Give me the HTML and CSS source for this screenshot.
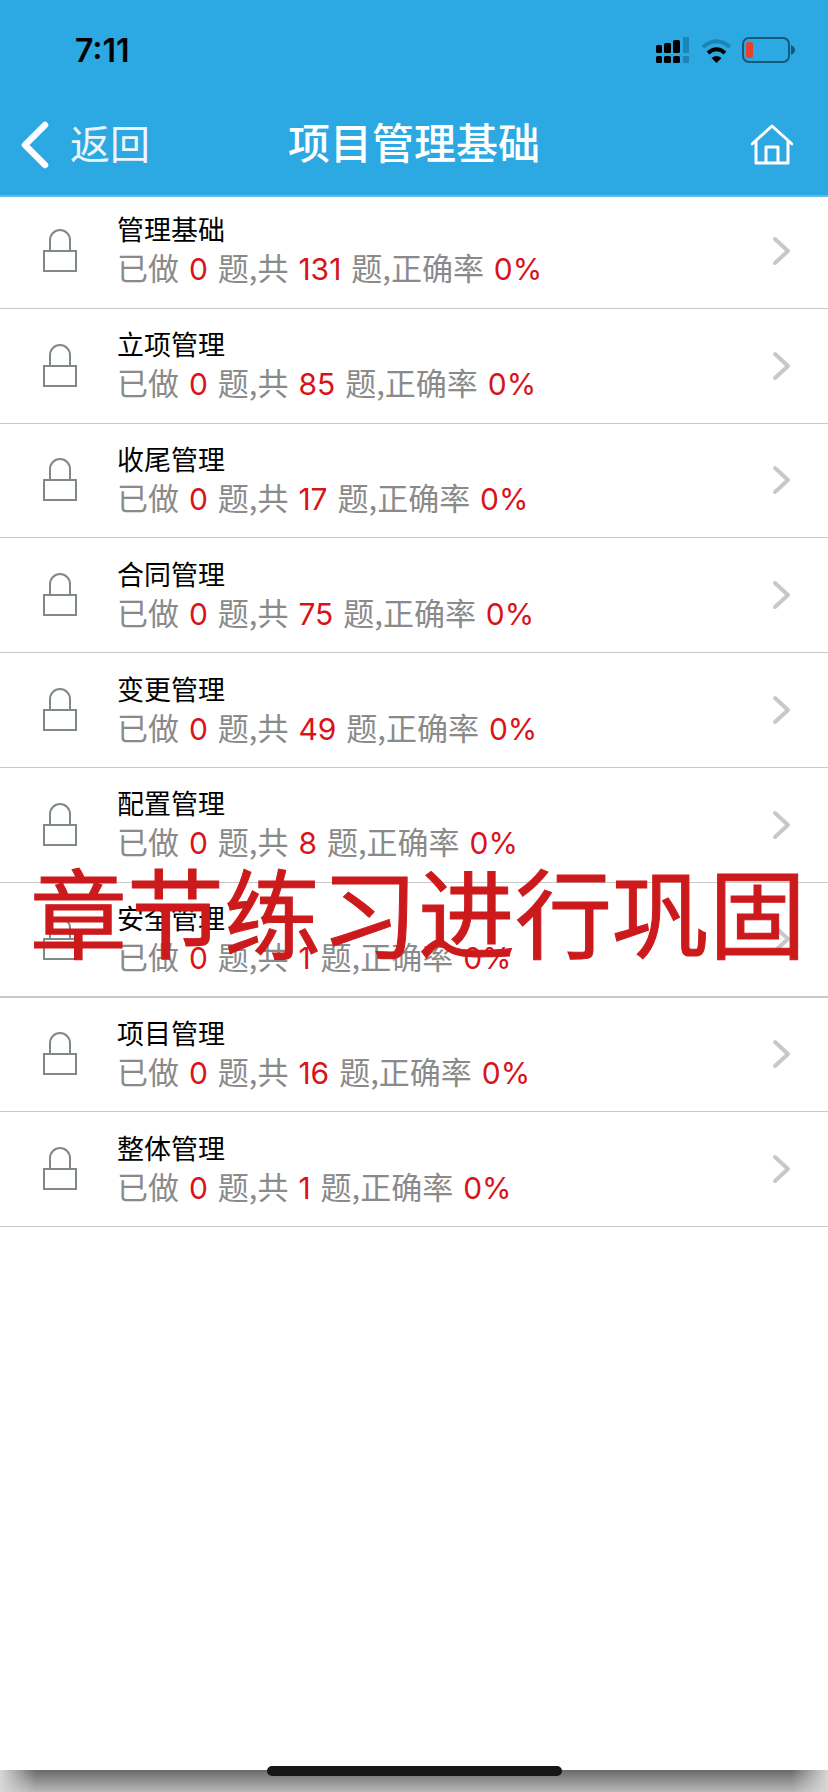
FILE: index.html
```html
<!DOCTYPE html>
<html lang="zh-CN">
<head>
    <meta charset="UTF-8">
    <meta name="viewport" content="width=device-width, initial-scale=1.0">
    <title>项目管理基础</title>
    <link rel="stylesheet" href="styles.css">
</head>
<body>
    <header class="top-bar">
        <div class="status-bar">
            <span class="status-time">7:11</span>
            <div class="status-icons">
                <svg class="icon-signal" width="33" height="26" viewBox="0 0 33 26">
                    <rect x="0" y="8" width="6" height="8" rx="1.5" fill="#000"/>
                    <rect x="8" y="6" width="7" height="10" rx="1.5" fill="#000"/>
                    <rect x="17" y="3" width="7" height="13" rx="1.5" fill="#000"/>
                    <rect x="27" y="0" width="6" height="16" fill="#1c85b6"/>
                    <rect x="0" y="19" width="6" height="7" rx="1.5" fill="#000"/>
                    <rect x="8" y="19" width="7" height="7" rx="1.5" fill="#000"/>
                    <rect x="17" y="19" width="7" height="7" rx="1.5" fill="#000"/>
                    <rect x="27" y="19" width="6" height="7" fill="#1c85b6"/>
                </svg>
                <svg class="icon-wifi" width="31" height="25" viewBox="0 0 31 25">
                    <path d="M2 9 Q15.500 -2.500 29 9" fill="none" stroke="#1c85b6" stroke-width="4"/>
                    <path d="M7 15 Q15.500 7.500 24 15" fill="none" stroke="#000" stroke-width="4"/>
                    <path d="M10.500 20 Q15.500 16 20.500 20 L15.500 25 Z" fill="#000"/>
                </svg>
                <svg class="icon-battery" width="53" height="26" viewBox="0 0 53 26">
                    <rect x="1" y="1" width="46" height="24" rx="6" fill="none" stroke="#14587a" stroke-width="2"/>
                    <rect x="4" y="5" width="7" height="16" rx="2" fill="#e8402e"/>
                    <path d="M49 8 Q53 10 53 13 Q53 16 49 18 Z" fill="#14587a"/>
                </svg>
            </div>
        </div>
        <nav class="nav-bar">
            <a href="#" class="nav-back">
                <svg width="32" height="50" viewBox="0 0 32 50">
                    <path d="M26 5 L6 25 L26 45" fill="none" stroke="#fff" stroke-width="6.500" stroke-linecap="round" stroke-linejoin="round"/>
                </svg>
                <span>返回</span>
            </a>
            <h1 class="nav-title">项目管理基础</h1>
            <a href="#" class="nav-home">
                <svg width="42" height="41" viewBox="0 0 42 41">
                    <path d="M1 20 L21 2 L41 20" fill="none" stroke="#fff" stroke-width="3" stroke-linejoin="round" stroke-linecap="round"/>
                    <path d="M5 17 V39 H37 V17 M15 39 V23 H27 V39" fill="none" stroke="#fff" stroke-width="3" stroke-linejoin="round"/>
                </svg>
            </a>
        </nav>
    </header>

    <ul class="chapter-list" id="chapterList"></ul>

    <div class="page-fill"></div>
    <div class="bottom-shadow"></div>
    <div class="home-indicator"></div>
    <div class="promo-text">章节练习进行巩固</div>

    <script>
        const chapters = [
            ['管理基础', 131],
            ['立项管理', 85],
            ['收尾管理', 17],
            ['合同管理', 75],
            ['变更管理', 49],
            ['配置管理', 8],
            ['安全管理', 1],
            ['项目管理', 16],
            ['整体管理', 1]
        ];

        const lockIcon = `<svg class="lock-icon" width="36" height="44" viewBox="0 0 36 44">
            <path d="M8 22 V11 A10 10 0 0 1 28 11 V22" fill="none" stroke="#7f8a85" stroke-width="2"/>
            <rect x="2" y="22" width="32" height="20" fill="#fff" stroke="#7f8a85" stroke-width="2"/>
        </svg>`;

        const arrowIcon = `<svg class="arrow-icon" width="20" height="32" viewBox="0 0 20 32">
            <path d="M3 4 L16 16 L3 28" fill="none" stroke="#c8c8c8" stroke-width="4" stroke-linecap="round" stroke-linejoin="round"/>
        </svg>`;

        const list = document.getElementById('chapterList');
        chapters.forEach(([name, total]) => {
            const row = document.createElement('li');
            row.className = 'chapter-row';
            row.innerHTML = `${lockIcon}
                <div class="chapter-text">
                    <div class="chapter-name">${name}</div>
                    <div class="chapter-stats">已做 <em>0</em> 题,共 <em>${total}</em> 题,正确率 <em>0%</em></div>
                </div>
                ${arrowIcon}`;
            list.appendChild(row);
        });
    </script>
</body>
</html>
```
FILE: styles.css
```css
* {
    margin: 0;
    padding: 0;
    box-sizing: border-box;
}

html, body {
    height: 100%;
}

body {
    position: relative;
    display: flex;
    flex-direction: column;
    overflow: hidden;
    background-color: #fff;
    font-family: "Noto Sans CJK SC", "Liberation Sans", sans-serif;
}

.top-bar {
    position: relative;
    z-index: 1;
    height: 197px;
    background-color: #2ca8e2;
    border-bottom: 2px solid #5cbdec;
}

.status-bar {
    height: 100px;
    display: flex;
    justify-content: space-between;
    align-items: center;
    padding: 0 33px 0 75px;
}

.status-time {
    font-family: "Inter", "Liberation Sans", sans-serif;
    font-size: 32px;
    font-weight: 600;
    color: #000;
}

.status-icons {
    display: flex;
    align-items: center;
    gap: 12px;
}

.icon-wifi {
    margin-right: -2px;
}

.nav-bar {
    position: relative;
    height: 95px;
    display: flex;
    justify-content: space-between;
    align-items: center;
    padding: 0 35px 6px 19px;
    color: #fff;
}

.nav-back {
    display: flex;
    align-items: center;
    gap: 19px;
    font-size: 40px;
    line-height: 54px;
    color: #eaf6fc;
    text-decoration: none;
}

.nav-back span {
    margin-bottom: 6px;
}

.nav-back svg,
.nav-home svg {
    display: block;
}

.nav-title {
    position: absolute;
    left: 0;
    right: 0;
    top: 11px;
    text-align: center;
    font-size: 42px;
    line-height: 60px;
    font-weight: 500;
}

.chapter-list {
    list-style: none;
    margin-top: -3px;
}

.chapter-row {
    height: 114.800px;
    display: flex;
    align-items: center;
    padding: 0 36px 0 42px;
    border-bottom: 1px solid #c8c8c8;
}

.chapter-row:nth-child(7) {
    border-bottom-width: 2px;
}

.lock-icon {
    flex-shrink: 0;
    margin-right: 39px;
}

.chapter-text {
    flex: 1;
}

.chapter-name {
    font-size: 27px;
    line-height: 36px;
    color: #000;
}

.chapter-stats {
    font-size: 31px;
    line-height: 42px;
    word-spacing: 3px;
    margin-top: -1px;
    color: #8a8a8a;
}

.chapter-stats em {
    font-family: "Inter", "Liberation Sans", sans-serif;
    font-size: 30px;
    font-style: normal;
    font-weight: 400;
    color: #d8141a;
}

.arrow-icon {
    flex-shrink: 0;
}

.page-fill {
    flex: 1;
}

.bottom-shadow {
    height: 22px;
    background: linear-gradient(to right, #d8d8d8, rgba(216, 216, 216, 0) 36px, rgba(216, 216, 216, 0) 792px, #d8d8d8),
        linear-gradient(to bottom, #6a6a6a, #b8b8b8);
}

.home-indicator {
    position: absolute;
    left: 267px;
    top: 1766px;
    width: 295px;
    height: 10px;
    border-radius: 5px;
    background-color: #171717;
}

.promo-text {
    position: absolute;
    z-index: 2;
    left: 30px;
    top: 844px;
    width: 780px;
    font-size: 97px;
    line-height: 130px;
    -webkit-text-stroke: 1px #cc1a1c;
    white-space: nowrap;
    color: #cc1a1c;
}
```
